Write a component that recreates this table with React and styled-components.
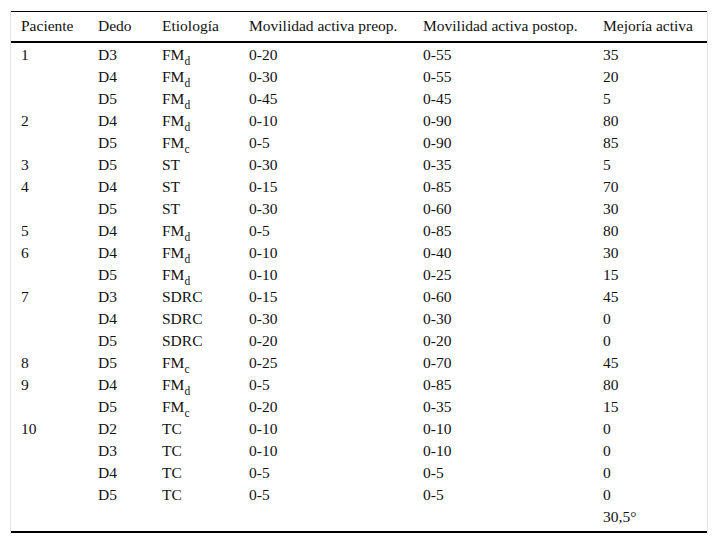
import React from "react";
import styled, { createGlobalStyle } from "styled-components";

const Global = createGlobalStyle`
  html, body { margin: 0; padding: 0; background: #fff; }
  body { font-family: "Liberation Serif", "Times New Roman", serif; color: #111; }
`;

const Page = styled.div`
  padding: 10px 0 0 10px;
  width: 698px;
`;

const Frame = styled.div`
  width: 696px;
  border-left: 1px solid #e4e4e4;
  border-right: 1px solid #e4e4e4;
  padding-top: 1px;
  padding-bottom: 1px;
`;

const Table = styled.table`
  width: 696px;
  border-collapse: collapse;
  table-layout: fixed;
  font-size: 15.5px;
  border-top: 1px solid #000;
  border-bottom: 2px solid #000;
`;

const HeadRow = styled.tr`
  height: 30px;
  border-bottom: 2px solid #000;
`;

const Th = styled.th`
  box-sizing: border-box;
  width: ${(p) => p.$w}px;
  text-align: left;
  font-weight: normal;
  padding: 0 0 0 10px;
  vertical-align: middle;
  white-space: nowrap;
`;

const Row = styled.tr`
  height: 22px;
`;

const Td = styled.td`
  padding: 1px 0 0 10px;
  height: 22px;
  box-sizing: border-box;
  vertical-align: middle;
  white-space: nowrap;
  line-height: 21px;
`;

const Spacer = styled.tr`
  height: 5px;
`;

const Sub = styled.sub`
  font-size: 11.5px;
  vertical-align: -5px;
  line-height: 0;
`;

const cols = [77, 64, 87, 174, 180, 114];

const Etio = ({ v }) => {
  if (v.startsWith("FM")) {
    return (
      <>
        FM<Sub>{v.slice(2)}</Sub>
      </>
    );
  }
  return v;
};

const rows = [
  ["1", "D3", "FMd", "0-20", "0-55", "35"],
  ["", "D4", "FMd", "0-30", "0-55", "20"],
  ["", "D5", "FMd", "0-45", "0-45", "5"],
  ["2", "D4", "FMd", "0-10", "0-90", "80"],
  ["", "D5", "FMc", "0-5", "0-90", "85"],
  ["3", "D5", "ST", "0-30", "0-35", "5"],
  ["4", "D4", "ST", "0-15", "0-85", "70"],
  ["", "D5", "ST", "0-30", "0-60", "30"],
  ["5", "D4", "FMd", "0-5", "0-85", "80"],
  ["6", "D4", "FMd", "0-10", "0-40", "30"],
  ["", "D5", "FMd", "0-10", "0-25", "15"],
  ["7", "D3", "SDRC", "0-15", "0-60", "45"],
  ["", "D4", "SDRC", "0-30", "0-30", "0"],
  ["", "D5", "SDRC", "0-20", "0-20", "0"],
  ["8", "D5", "FMc", "0-25", "0-70", "45"],
  ["9", "D4", "FMd", "0-5", "0-85", "80"],
  ["", "D5", "FMc", "0-20", "0-35", "15"],
  ["10", "D2", "TC", "0-10", "0-10", "0"],
  ["", "D3", "TC", "0-10", "0-10", "0"],
  ["", "D4", "TC", "0-5", "0-5", "0"],
  ["", "D5", "TC", "0-5", "0-5", "0"],
  ["", "", "", "", "", "30,5°"],
];

const headers = [
  "Paciente",
  "Dedo",
  "Etiología",
  "Movilidad activa preop.",
  "Movilidad activa postop.",
  "Mejoría activa",
];

export default function App() {
  return (
    <>
      <Global />
      <Page>
        <Frame>
          <Table>
            <thead>
              <HeadRow>
                {headers.map((h, i) => (
                  <Th key={h} $w={cols[i]}>
                    {h}
                  </Th>
                ))}
              </HeadRow>
            </thead>
            <tbody>
              {rows.map((r, i) => (
                <Row key={i}>
                  <Td>{r[0]}</Td>
                  <Td>{r[1]}</Td>
                  <Td>
                    <Etio v={r[2]} />
                  </Td>
                  <Td>{r[3]}</Td>
                  <Td>{r[4]}</Td>
                  <Td>{r[5]}</Td>
                </Row>
              ))}
              <Spacer>
                <td colSpan={6} />
              </Spacer>
            </tbody>
          </Table>
        </Frame>
      </Page>
    </>
  );
}
